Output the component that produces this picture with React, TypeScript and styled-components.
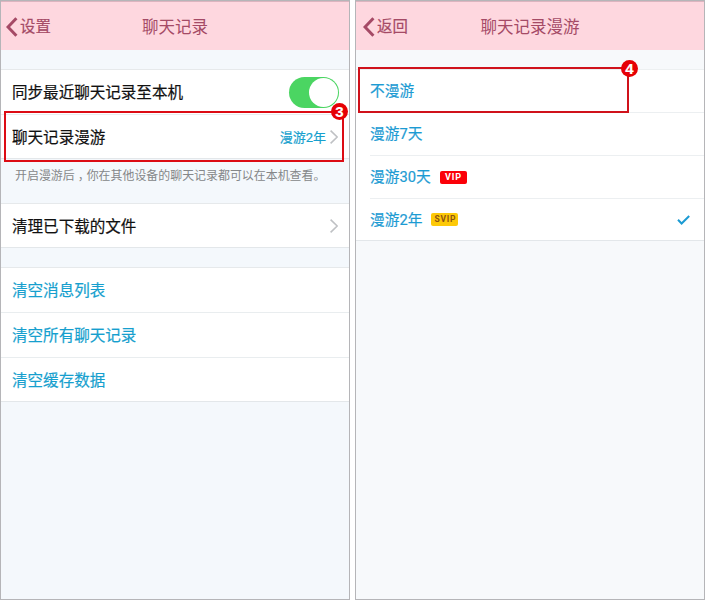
import React from "react";
import styled, { createGlobalStyle } from "styled-components";

const Global = createGlobalStyle`
  * { box-sizing: border-box; }
  body {
    margin: 0;
    background: #fff;
    font-family: Roboto, "Noto Sans CJK SC", sans-serif;
    -webkit-text-stroke: 0.2px currentColor;
  }
`;

const Screens = styled.main`
  display: flex;
  gap: 5px;
  width: 705px;
  height: 600px;
`;

const Phone = styled.section<{ $bg: string }>`
  position: relative;
  display: flex;
  flex-direction: column;
  width: 350px;
  height: 600px;
  border: 1px solid #b5b5b8;
  background: ${(p) => p.$bg};
`;

const Header = styled.header<{ $inset: number }>`
  display: grid;
  grid-template-columns: 1fr auto 1fr;
  align-items: center;
  height: 49px;
  padding-left: ${(p) => p.$inset}px;
  padding-right: ${(p) => p.$inset}px;
  border-top: 1px solid #dcb4bf;
  background: #fed7df;
  color: #a54a66;
`;

const Back = styled.div`
  display: flex;
  align-items: center;
  gap: 2px;
  padding-top: 1px;
  font-size: 15.4px;
  line-height: 24px;
`;

const Title = styled.h1`
  margin: 0;
  padding-top: 3px;
  font-size: 16.5px;
  line-height: 24px;
  font-weight: 400;
  -webkit-text-stroke-width: 0;
`;

const Group = styled.div<{ $top: number }>`
  margin-top: ${(p) => p.$top}px;
  border-top: 1px solid #e6e9eb;
  border-bottom: 1px solid #e3e7ea;
  background: #fff;
`;

const Row = styled.div<{ $h: number; $blue?: boolean; $line?: boolean }>`
  display: flex;
  align-items: center;
  height: ${(p) => p.$h}px;
  padding: 3px 11px 0 11px;
  border-bottom: ${(p) => (p.$line ? "1px solid #e9edef" : "0")};
  font-size: 15.55px;
  line-height: 25px;
  color: ${(p) => (p.$blue ? "#169fce" : "#111")};
`;

const Value = styled.span`
  margin: -2px 4px 0 auto;
  font-size: 13px;
  color: #169fce;
`;

const End = styled.span`
  display: flex;
  margin-left: auto;
`;

const Note = styled.p`
  display: flex;
  height: 44px;
  margin: 0;
  padding: 7px 0 0 14px;
  font-size: 11.95px;
  line-height: 21px;
  white-space: nowrap;
  color: #858789;
  -webkit-text-stroke-width: 0;
`;

const Comma = styled.span`
  margin: 0 -3px 0 3px;
`;

const Toggle = styled.span`
  display: flex;
  justify-content: flex-end;
  width: 50px;
  height: 31px;
  margin: -3px -1px 0 auto;
  padding: 1px;
  border-radius: 16px;
  background: #4bd562;
`;

const Knob = styled.span`
  width: 29px;
  height: 29px;
  border-radius: 50%;
  background: #fff;
`;

const Options = styled.div`
  margin-top: 19px;
  padding-left: 14px;
  border-top: 1px solid #edf0f1;
  border-bottom: 1px solid #e3e7ea;
  background: #fff;
`;

const Option = styled.div<{ $h: number }>`
  display: flex;
  align-items: center;
  height: ${(p) => p.$h}px;
  padding: 0 14px 0 0;
  font-size: 14.7px;
  line-height: 22px;
  color: #1c9bd3;
  & + & {
    border-top: 1px solid #eceff1;
  }
`;

const Tag = styled.span<{ $gold?: boolean }>`
  margin: ${(p) => (p.$gold ? "0 0 0 9px" : "1px 0 0 9px")};
  width: 27px;
  height: 13px;
  border-radius: 2px;
  background: ${(p) => (p.$gold ? "#fdc907" : "#fb0008")};
  color: ${(p) => (p.$gold ? "#8d5411" : "#fff")};
  font: 700 ${(p) => (p.$gold ? "8.5px" : "9px")}/13px Roboto, sans-serif;
  letter-spacing: ${(p) => (p.$gold ? "0.7px" : "0.9px")};
  text-indent: 1px;
  text-align: center;
  -webkit-text-stroke-width: 0;
`;

const Highlight = styled.div<{ $x: number; $y: number; $w: number; $h: number; $c: string }>`
  position: absolute;
  left: ${(p) => p.$x}px;
  top: ${(p) => p.$y}px;
  width: ${(p) => p.$w}px;
  height: ${(p) => p.$h}px;
  border: 2px solid ${(p) => p.$c};
`;

const Step = styled.span<{ $right: number; $top: number }>`
  position: absolute;
  right: ${(p) => p.$right}px;
  top: ${(p) => p.$top}px;
  width: 17px;
  height: 17px;
  border-radius: 50%;
  background: #e60005;
  color: #fff;
  font: 700 15px/17px "Liberation Sans", sans-serif;
  text-align: center;
`;

const BackIcon = () => (
  <svg width="12" height="20" viewBox="0 0 12 20" fill="none" stroke="#a54a66" strokeWidth="3">
    <path d="M10.4 1.2 2 10l8.4 8.8" />
  </svg>
);

const ChevronIcon = styled.svg`
  margin-top: -3px;
`;

const Chevron = () => (
  <ChevronIcon width="8" height="14" viewBox="0 0 8 14" fill="none" stroke="#bfc1c4" strokeWidth="1.6">
    <path d="m.6.6 6.6 6.4L.6 13.4" />
  </ChevronIcon>
);

const Check = () => (
  <svg width="13" height="10" viewBox="0 0 13 10" fill="none" stroke="#1c9bd3" strokeWidth="2">
    <path d="m1 4.8 3.6 3.7L12.2 1" />
  </svg>
);

const TopBar = ({ back, title, inset }: { back: string; title: string; inset: number }) => (
  <Header $inset={inset}>
    <Back>
      <BackIcon />
      {back}
    </Back>
    <Title>{title}</Title>
  </Header>
);

export default function App() {
  return (
    <>
      <Global />
      <Screens>
        <Phone $bg="#f4f8fc">
          <TopBar inset={5} back="设置" title="聊天记录" />
          <Group $top={19}>
            <Row $h={45} $line>
              同步最近聊天记录至本机
              <Toggle>
                <Knob />
              </Toggle>
            </Row>
            <Row $h={43}>
              聊天记录漫游
              <Value>漫游2年</Value>
              <Chevron />
            </Row>
          </Group>
          <Note>
            开启漫游后<Comma>，</Comma>你在其他设备的聊天记录都可以在本机查看。
          </Note>
          <Group $top={0}>
            <Row $h={43}>
              清理已下载的文件
              <End>
                <Chevron />
              </End>
            </Row>
          </Group>
          <Group $top={19}>
            <Row $h={45} $blue $line>清空消息列表</Row>
            <Row $h={45} $blue $line>清空所有聊天记录</Row>
            <Row $h={43} $blue>清空缓存数据</Row>
          </Group>
          <Highlight $x={3} $y={110} $w={340} $h={51} $c="#dc0c14">
            <Step $right={-6} $top={-10}>3</Step>
          </Highlight>
        </Phone>
        <Phone $bg="#f7f9fb">
          <TopBar inset={7} back="返回" title="聊天记录漫游" />
          <Options>
            <Option $h={42}>不漫游</Option>
            <Option $h={43}>漫游7天</Option>
            <Option $h={43}>
              漫游30天<Tag>VIP</Tag>
            </Option>
            <Option $h={42}>
              漫游2年<Tag $gold>SVIP</Tag>
              <End>
                <Check />
              </End>
            </Option>
          </Options>
          <Highlight $x={2} $y={66} $w={271} $h={46} $c="#d0121b">
            <Step $right={-11} $top={-9}>4</Step>
          </Highlight>
        </Phone>
      </Screens>
    </>
  );
}
